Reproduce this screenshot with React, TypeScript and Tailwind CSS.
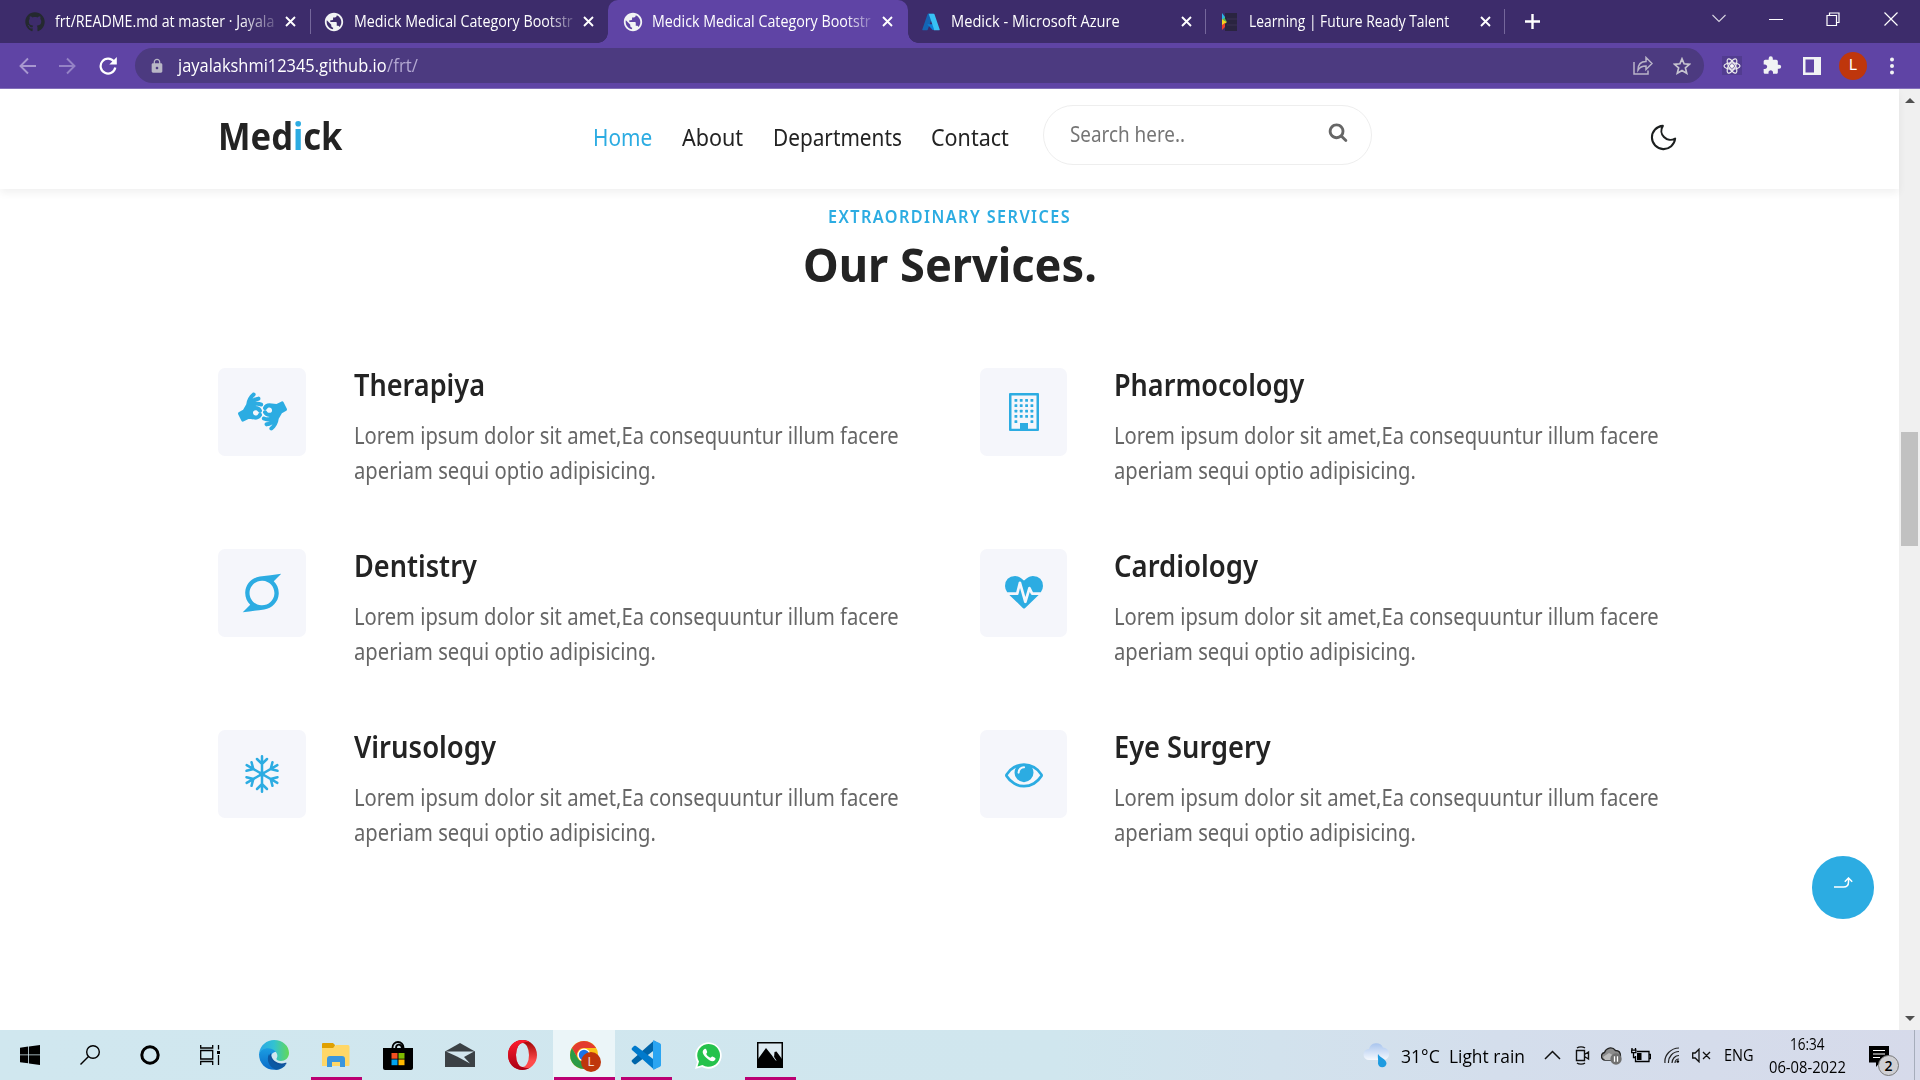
import React, { useLayoutEffect, useRef, useState } from "react";
import { FaAmericanSignLanguageInterpreting, FaSuperpowers, FaGithub } from "react-icons/fa";
import { MdLock, MdPublic, MdExtension } from "react-icons/md";

/* One line of text, condensed or widened to take exactly `w` pixels. */
function Fit({ w, className = "", children }: { w: number; className?: string; children: React.ReactNode }) {
  const ref = useRef<HTMLSpanElement>(null);
  const [k, setK] = useState(1);
  useLayoutEffect(() => {
    const measure = () => {
      if (ref.current) setK(w / ref.current.offsetWidth);
    };
    measure();
    document.fonts?.ready.then(measure);
  }, [w]);
  return (
    <span className={"block shrink-0 whitespace-nowrap " + className} style={{ width: w }}>
      <span ref={ref} className="inline-block origin-left" style={{ transform: `scaleX(${k})` }}>
        {children}
      </span>
    </span>
  );
}

const Close = () => (
  <svg className="h-[11px] w-[11px] shrink-0" viewBox="0 0 11 11" stroke="#fff" strokeWidth="1.9">
    <path d="M1 1l9 9M10 1l-9 9" />
  </svg>
);

const Globe = () => (
  <span className="flex h-[18px] w-[18px] shrink-0 items-center justify-center">
    <MdPublic className="h-[22px] w-[22px] shrink-0 text-[#f1f3f4]" />
  </span>
);

const AzureLogo = () => (
  <svg className="h-[18px] w-[18px] shrink-0" viewBox="0 0 96 96">
    <path fill="#1464b4" d="M33 4h28L31 88a5 5 0 0 1-4 4H6a4 4 0 0 1-4-6L29 8a5 5 0 0 1 4-4z" />
    <path fill="#0b7fd8" d="M71 60H28l29 31h24z" />
    <path fill="#38c1f4" d="M67 8a5 5 0 0 0-4-4H33a5 5 0 0 1 4 4l27 78a4 4 0 0 1-4 6h30a4 4 0 0 0 4-6z" />
  </svg>
);

const TalentLogo = () => (
  <svg className="h-[18px] w-[16px] shrink-0" viewBox="0 0 16 18">
    <path fill="#2a2440" d="M3 0h12v18H3z" />
    <path fill="#3a3152" d="M5 5.500h10v1H5zM5 11.500h10v1H5z" />
    <path fill="#27b6e8" d="M0 0l3 4v4L0 6z" />
    <path fill="#f5d521" d="M0 6l5 3-5 4z" />
    <path fill="#58b947" d="M2 4l3 5-4-2z" />
    <path fill="#e8402e" d="M0 12l3-2v4l-3 3z" />
  </svg>
);

const Sep = () => <span className="h-[25px] w-px shrink-0 bg-[#75679b]" />;

function TabStrip() {
  return (
    <div className="flex h-[43px] items-center bg-[#3d2c6b] font-['Open_Sans',sans-serif] text-[15.500px] leading-[20px] text-white">
      <div className="flex w-[310px] shrink-0 items-center pl-[25px]">
        <FaGithub className="h-5 w-5 shrink-0 text-[#24292f]" />
        <div className="-mt-[2px] ml-[10px] w-[220px] [mask-image:linear-gradient(to_right,#000_84%,#0003)]">
          <Fit w={219}>frt/README.md at master · Jayala</Fit>
        </div>
        <span className="ml-[10px] flex"><Close /></span>
      </div>
      <Sep />
      <div className="flex w-[297px] shrink-0 items-center pl-[14px]">
        <Globe />
        <div className="-mt-[2px] ml-[11px] w-[219px] [mask-image:linear-gradient(to_right,#000_88%,#0003)]">
          <Fit w={219}>Medick Medical Category Bootstr</Fit>
        </div>
        <span className="ml-[10px] flex"><Close /></span>
      </div>
      <div className="relative flex h-[43px] w-[300px] shrink-0 items-center rounded-t-[10px] bg-[#5f44a5] pl-[16px]">
        <span className="absolute -left-[10px] bottom-0 h-[10px] w-[10px] bg-[radial-gradient(circle_at_0_0,transparent_9.5px,#5f44a5_10px)]" />
        <span className="absolute -right-[10px] bottom-0 h-[10px] w-[10px] bg-[radial-gradient(circle_at_100%_0,transparent_9.5px,#5f44a5_10px)]" />
        <Globe />
        <div className="-mt-[2px] ml-[10px] w-[220px] [mask-image:linear-gradient(to_right,#000_88%,#0003)]">
          <Fit w={219}>Medick Medical Category Bootstr</Fit>
        </div>
        <span className="ml-[10px] flex"><Close /></span>
      </div>
      <div className="flex w-[297px] shrink-0 items-center pl-[14px]">
        <AzureLogo />
        <Fit w={169} className="-mt-[2px] ml-[11px]">Medick - Microsoft Azure</Fit>
        <span className="ml-[61px] flex"><Close /></span>
      </div>
      <Sep />
      <div className="flex w-[298px] shrink-0 items-center pl-[16px]">
        <TalentLogo />
        <Fit w={200} className="-mt-[2px] ml-[11px]">Learning | Future Ready Talent</Fit>
        <span className="ml-[31px] flex"><Close /></span>
      </div>
      <Sep />
      <svg className="ml-[20px] h-[15px] w-[15px] shrink-0" viewBox="0 0 15 15" stroke="#fff" strokeWidth="2.4">
        <path d="M7.500 0v15M0 7.500h15" />
      </svg>
      <div className="ml-auto flex -translate-y-[3px] items-center pr-[22px]">
        <svg className="h-[14px] w-[14px]" viewBox="0 0 14 14" fill="none" stroke="#d8d5e1" strokeWidth="1.1">
          <path d="M.5 3L7 9.500 13.500 3" />
        </svg>
        <svg className="ml-[43px] h-[14px] w-[14px]" viewBox="0 0 14 14" stroke="#fff">
          <path d="M0 7.500h14" />
        </svg>
        <svg className="ml-[43px] h-[14px] w-[14px]" viewBox="0 0 14 14" fill="none" stroke="#fff" strokeWidth="1.2">
          <path d="M1 3.500h9.500v10H1zM3.500 3.500V1H13v9.500h-2.500" />
        </svg>
        <svg className="ml-[44px] h-[14px] w-[14px]" viewBox="0 0 14 14" stroke="#fff" strokeWidth="1.2">
          <path d="M.5.5l13 13M13.500.5l-13 13" />
        </svg>
      </div>
    </div>
  );
}

function Toolbar() {
  return (
    <div className="flex h-[46px] items-center border-b border-[#8571bb] bg-[#5f44a5] pl-[19px] font-['Open_Sans',sans-serif]">
      <svg className="h-[18px] w-[17px]" viewBox="0 0 17 18" fill="none" stroke="#a898d0" strokeWidth="1.9">
        <path d="M17 9H1.500M9 1.500L1.500 9 9 16.500" />
      </svg>
      <svg className="ml-[23px] h-[18px] w-[17px]" viewBox="0 0 17 18" fill="none" stroke="#9583c6" strokeWidth="1.9">
        <path d="M0 9h15.500M8 1.500L15.500 9 8 16.500" />
      </svg>
      <svg className="ml-[23px] h-[18px] w-[18px]" viewBox="0 0 18 18" fill="none" stroke="#fff" strokeWidth="2.2">
        <path d="M15 4.700A7.400 7.400 0 1 0 16.300 10.500" />
        <path fill="#fff" stroke="none" d="M17.800 0v7.500h-7.500z" />
      </svg>
      <div className="ml-[18px] flex h-[35px] w-[1569px] items-center rounded-full bg-[#4c3a80] pl-[14px]">
        <MdLock className="h-4 w-4 text-[#b9b7c6]" />
        <div className="-mt-px ml-[13px] flex items-center text-[18px] leading-[24px]">
          <Fit w={209} className="text-white">jayalakshmi12345.github.io</Fit>
          <Fit w={31} className="text-[#b3a8d1]">/frt/</Fit>
        </div>
        <svg className="ml-auto h-[19px] w-[20px]" viewBox="0 0 20 19" fill="none" stroke="#b9b4c8" strokeWidth="1.5">
          <path d="M1 6v12h14v-3.500M5 14c0-6 3-8.500 8-8.500V1.500l6 6-6 6V10c-4 0-6.500 1.500-8 4z" />
        </svg>
        <svg className="ml-[20px] mr-[13px] h-[18px] w-[18px]" viewBox="0 0 18 18" fill="none" stroke="#c6c3cf" strokeWidth="1.7">
          <path d="M9 1.800l2.100 5 5.400.5-4.100 3.600 1.300 5.300L9 13.400l-4.700 2.800 1.300-5.300L1.500 7.300l5.400-.5z" />
        </svg>
      </div>
      <span className="ml-[18px] flex h-[19px] w-[20px] items-center justify-center bg-[#523c90]">
        <svg className="h-[18px] w-[18px]" viewBox="0 0 18 18" fill="none" stroke="#eee" strokeWidth="1.200">
          <ellipse cx="9" cy="9" rx="8" ry="3.200" />
          <ellipse cx="9" cy="9" rx="8" ry="3.200" transform="rotate(60 9 9)" />
          <ellipse cx="9" cy="9" rx="8" ry="3.200" transform="rotate(120 9 9)" />
          <circle cx="9" cy="9" r="1.500" fill="#fff" />
        </svg>
      </span>
      <MdExtension className="ml-[20px] mr-px h-[21px] w-[20px] text-[#f1f3f4]" />
      <svg className="ml-[20px] h-[18px] w-[18px]" viewBox="0 0 18 18">
        <path fill="#f1f3f4" fillRule="evenodd" d="M0 0h18v18H0zM2.500 2.500v13H11v-13z" />
      </svg>
      <span className="ml-[18px] flex h-[28px] w-[28px] items-center justify-center rounded-full bg-[#bf360c] font-['Roboto',sans-serif] text-[15px] text-white">L</span>
      <svg className="ml-[23px] h-[18px] w-[4px]" viewBox="0 0 4 18" fill="#f1f3f4">
        <circle cx="2" cy="2.500" r="2" />
        <circle cx="2" cy="9" r="2" />
        <circle cx="2" cy="15.500" r="2" />
      </svg>
    </div>
  );
}

function Navbar() {
  return (
    <header className="flex h-[100px] shrink-0 items-start bg-white pl-[218px] text-[#232323] shadow-[0_4px_8px_rgba(0,0,0,0.06)]">
      <Fit w={125} className="mt-[23px] text-[37px] font-bold leading-[48px]">
        Med<span className="text-[#2cace2]">i</span>ck
      </Fit>
      <nav className="ml-[250px] mt-[32px] flex text-[24px] leading-[32px]">
        <Fit w={59} className="text-[#2cace2]">Home</Fit>
        <Fit w={61} className="ml-[30px]">About</Fit>
        <Fit w={129} className="ml-[30px]">Departments</Fit>
        <Fit w={78} className="ml-[29px]">Contact</Fit>
      </nav>
      <div className="ml-[34px] mt-[16px] flex h-[60px] w-[329px] items-center rounded-full border border-[#eeeeee] pl-[26px]">
        <Fit w={115} className="-mt-[3px] text-[21px] leading-[30px] text-[#757575]">Search here..</Fit>
        <svg className="-mt-[7px] ml-[143px] h-[20px] w-[20px]" viewBox="0 0 1792 1792" fill="#666">
          <path d="M1216 832q0-185-131.500-316.500t-316.500-131.500-316.500 131.500-131.500 316.500 131.500 316.500 316.500 131.500 316.500-131.500 131.500-316.500zm512 832q0 52-38 90t-90 38q-54 0-90-38l-343-342q-179 124-399 124-143 0-273.500-55.500t-225-150-150-225-55.500-273.500 55.500-273.500 150-225 225-150 273.500-55.500 273.500 55.500 225 150 150 225 55.500 273.500q0 220-124 399l343 343q37 37 37 90z" />
        </svg>
      </div>
      <svg className="ml-[276px] mt-[33px] h-[31px] w-[31px]" viewBox="0 0 24 24" fill="none" stroke="#1c1f1f" strokeWidth="1.600" strokeLinejoin="round">
        <path d="M21 12.790A9 9 0 1 1 11.500 3 7 7 0 0 0 21 12.790z" />
      </svg>
    </header>
  );
}

const Building = () => (
  <svg className="-mt-px h-[38px] w-[30px]" viewBox="0 0 30 38" fill="#2cace2">
    <path fillRule="evenodd" d="M1 0h28a1 1 0 0 1 1 1v36a1 1 0 0 1-1 1H1a1 1 0 0 1-1-1V1a1 1 0 0 1 1-1zM2.500 2.500v33.200H11V30h8v5.700h8.500V2.500z" />
    {[6, 11.300, 16.700, 22, 27.300].map((y, row) =>
      [5.500, 10.800, 16.200, 21.500].map((x, col) =>
        row === 4 && (col === 1 || col === 2) ? null : <rect key={`${x}-${y}`} x={x} y={y} width="2.800" height="2.800" rx=".5" />
      )
    )}
  </svg>
);

const HeartBeat = () => (
  <svg className="mt-[3px] h-[38px] w-[38px]" viewBox="0 0 1792 1792" fill="#2cace2">
    <path d="M1280 896h305q-5 6-10 10.500t-9 7.500l-3 4-623 600q-18 18-44 18t-44-18l-624-602q-5-2-21-20h369q22 0 39.500-13.500t22.500-34.500l70-281 190 667q6 20 23 33t39 13q21 0 38-13t23-33l146-485 56 112q18 35 57 35zm512-428q0 145-103 300h-369l-111-221q-8-17-25.500-27t-36.500-8q-45 5-56 46l-129 430-196-686q-6-20-23.500-33t-39.500-13-39 13.500-22 34.500l-116 464h-423q-103-155-103-300 0-220 127-344t351-124q62 0 126.500 21.500t120 58 95.500 68.500 76 68q36-36 76-68t95.500-68.500 120-58 126.500-21.500q224 0 351 124t127 344z" />
  </svg>
);

const Eye = () => (
  <svg className="h-[38px] w-[38px]" viewBox="0 0 1792 1792" fill="#2cace2">
    <path d="M1664 960q-152-236-381-353 61 104 61 225 0 185-131.500 316.500t-316.500 131.500-316.500-131.500-131.500-316.500q0-121 61-225-229 117-381 353 133 205 333.500 326.500t434.500 121.500 434.500-121.500 333.500-326.500zm-720-384q0-20-14-34t-34-14q-125 0-214.500 89.500t-89.500 214.500q0 20 14 34t34 14 34-14 14-34q0-86 61-147t147-61q20 0 34-14t14-34zm848 384q0 34-20 69-140 230-376.500 368.500t-499.500 138.500-499.500-139-376.500-368q-20-35-20-69t20-69q140-229 376.500-368t499.500-139 499.500 139 376.500 368q20 35 20 69z" />
  </svg>
);

const Snowflake = () => (
  <svg className="-mt-px h-[38px] w-[38px]" viewBox="-19 -19 38 38" fill="none" stroke="#2cace2" strokeWidth="2.500" strokeLinecap="round">
    {[0, 60, 120, 180, 240, 300].map((a) => (
      <path key={a} transform={`rotate(${a})`} d="M0 0v-17.700M-5-15l5 5 5-5" />
    ))}
    <circle r="1.500" fill="#2cace2" />
  </svg>
);

type Service = { title: string; w: number; icon: React.ReactNode };

const services: Service[] = [
  { title: "Therapiya", w: 131, icon: <FaAmericanSignLanguageInterpreting className="-mt-[2px] h-[49px] w-[49px] text-[#2cace2]" /> },
  { title: "Pharmocology", w: 190, icon: <Building /> },
  { title: "Dentistry", w: 123, icon: <FaSuperpowers className="-mt-px h-[44px] w-[44px] text-[#2cace2]" /> },
  { title: "Cardiology", w: 144, icon: <HeartBeat /> },
  { title: "Virusology", w: 142, icon: <Snowflake /> },
  { title: "Eye Surgery", w: 157, icon: <Eye /> },
];

function Services() {
  return (
    <section className="flex flex-col">
      <div className="flex flex-col items-center pt-[14px]">
        <Fit w={243} className="text-[17px] font-semibold leading-[28px] tracking-[1.500px] text-[#2cace2]">EXTRAORDINARY SERVICES</Fit>
        <Fit w={294} className="mt-[2px] text-[47px] font-bold leading-[62px] text-[#232323]">Our Services.</Fit>
      </div>
      <div className="ml-[218px] mt-[73px] grid grid-cols-[762px_700px] gap-y-[93px]">
        {services.map((s) => (
          <div key={s.title} className="group flex h-[88px]">
            <div className="flex h-[88px] w-[88px] shrink-0 items-center justify-center rounded-[7px] bg-[#f5f6fb] group-even:w-[87px]">{s.icon}</div>
            <div className="ml-[48px] group-even:ml-[47px]">
              <Fit w={s.w} className="-mt-[4px] text-[30px] font-semibold leading-[41px] text-[#232323]">{s.title}</Fit>
              <div className="mt-[13px] text-[23px] leading-[35px] text-[#666]">
                <Fit w={545}>Lorem ipsum dolor sit amet,Ea consequuntur illum facere</Fit>
                <Fit w={302}>aperiam sequi optio adipisicing.</Fit>
              </div>
            </div>
          </div>
        ))}
      </div>
    </section>
  );
}

const WindowsLogo = () => (
  <svg className="h-[20px] w-[20px]" viewBox="0 0 20 20">
    <path d="M0 2.800l8.200-1.200v7.900H0zM9 1.400L20 0v9.500H9zM0 10.300h8.200v8L0 17.200zM9 10.300h11V20L9 18.500z" />
  </svg>
);
const SearchGlyph = () => (
  <svg className="h-[20px] w-[20px]" viewBox="0 0 20 20" fill="none" stroke="#000" strokeWidth="1.400">
    <circle cx="13" cy="7" r="6.300" />
    <path d="M8.500 11.500L.5 19.500" />
  </svg>
);
const Cortana = () => (
  <svg className="h-[20px] w-[20px]" viewBox="0 0 20 20" fill="none" stroke="#000" strokeWidth="3">
    <circle cx="10" cy="10" r="8.200" />
  </svg>
);
const TaskView = () => (
  <svg className="h-[20px] w-[20px]" viewBox="0 0 20 20" fill="none" stroke="#000" strokeWidth="1.300">
    <path d="M.7 0v3h12V0M.7 20v-3.500h12V20M.7 5.500h12v8.500H.7zM18.500 0v4.500M18.500 10v10" />
    <path fill="#000" stroke="none" d="M17 6h3v3h-3z" />
  </svg>
);
const Edge = () => (
  <svg className="h-[30px] w-[30px]" viewBox="0 0 30 30">
    <defs>
      <linearGradient id="edgeTop" x1="0" x2="1"><stop offset="0" stopColor="#2aa6e6" /><stop offset=".5" stopColor="#32c2d2" /><stop offset="1" stopColor="#63d957" /></linearGradient>
      <linearGradient id="edgeLeft" x1="0" y1="0" x2="0" y2="1"><stop offset="0" stopColor="#1b9de2" /><stop offset="1" stopColor="#0a6bc8" /></linearGradient>
    </defs>
    <path fill="url(#edgeTop)" d="M0 14C1 5 8 0 15 0c9 0 15 6 15 13 0 5-4 8-8 8-3 0-5-1-4.500-2.500C19 17 19 12 14 10 9 8 3 9 0 14z" />
    <path fill="url(#edgeLeft)" d="M0 14c2-5 8-7 13-5 3 1 4 3 4 3-4 0-6 4-5 8 1 5 5 9 8 9.200C9 32 0 25 0 14z" />
    <path fill="#10519b" d="M12 13c-3 3-3 8 0 11 4 4 10 4 15 0 1-1 .5-1.500-.5-1.200C20 25 12 21 12 13z" />
    <path fill="#0c59a4" d="M10 14c-3 6 0 13 7 15.800 4 0 8-2 10.500-6-6 4-15 0-17.500-9.800z" />
  </svg>
);
const Explorer = () => (
  <svg className="h-[24px] w-[28px]" viewBox="0 0 28 24">
    <path fill="#e0a000" d="M0 1a1 1 0 0 1 1-1h10l2 2-1 4H0z" />
    <path fill="#ffd767" d="M0 5h11l3-3h12a1.500 1.500 0 0 1 1.500 1.500V22a1 1 0 0 1-1 1H0z" />
    <path fill="#3a96dd" d="M5 24v-8a3 3 0 0 1 3-3h12a3 3 0 0 1 3 3v8h-5v-5h-8v5z" />
  </svg>
);
const Store = () => (
  <svg className="h-[29px] w-[30px]" viewBox="0 0 30 29">
    <path fill="none" stroke="#000" strokeWidth="1.800" d="M9.500 8V6.500a5.500 5.500 0 0 1 11 0V8M13 7c0-4 5-5 6 0" />
    <path d="M0 7h30v20a2 2 0 0 1-2 2H2a2 2 0 0 1-2-2z" />
    <path fill="#f25022" d="M8.500 12h6v5.700h-6z" />
    <path fill="#7fba00" d="M15.500 12h6v5.700h-6z" />
    <path fill="#00a4ef" d="M8.500 18.500h6v5.700h-6z" />
    <path fill="#ffb900" d="M15.500 18.500h6v5.700h-6z" />
  </svg>
);
const Mail = () => (
  <svg className="h-[24px] w-[30px]" viewBox="0 0 30 24">
    <path fill="#3b4145" d="M0 8.500L15 0l15 8.500V24H0z" />
    <path fill="#d3e6ee" d="M1 8.500h28L19 14l6 6.500L12 13.500z" />
  </svg>
);
const Opera = () => (
  <svg className="h-[30px] w-[29px]" viewBox="0 0 29 30">
    <defs>
      <linearGradient id="operaL" x1="0" y1="0" x2="0" y2="1"><stop offset="0" stopColor="#ff1b2d" /><stop offset="1" stopColor="#a70014" /></linearGradient>
      <linearGradient id="operaR" x1="0" y1="0" x2="0" y2="1"><stop offset="0" stopColor="#9c0000" /><stop offset=".7" stopColor="#ff4b4b" /></linearGradient>
    </defs>
    <path fill="url(#operaR)" fillRule="evenodd" d="M14.500 0a14.500 15 0 1 1 0 30 14.500 15 0 0 1 0-30zm0 3a6.500 12 0 1 0 0 24 6.500 12 0 0 0 0-24z" />
    <path fill="url(#operaL)" fillRule="evenodd" d="M14.500 0C6 0 0 6.500 0 15s6 15 14.500 15c3 0 5.500-1 7.500-2.500-3 1-5 .5-7.500-.5a6.500 12 0 0 1 0-24c2.500-1 4.500-1.500 7.500-.5C20 1 17.500 0 14.500 0z" />
  </svg>
);
const Chrome = () => (
  <span className="relative flex">
    <svg className="h-[28px] w-[28px]" viewBox="0 0 28 28">
      <circle cx="14" cy="14" r="14" fill="#fbc116" />
      <path fill="#e33b2e" d="M1.900 7A14 14 0 0 1 26.100 7H14a7 7 0 0 0-6.100 10.500z" />
      <path fill="#2b9b47" d="M1.900 7l6 10.500A7 7 0 0 0 20 17.500L14 28A14 14 0 0 1 1.900 7z" />
      <circle cx="14" cy="14" r="6.500" fill="#fff" />
      <circle cx="14" cy="14" r="5.200" fill="#1a73e8" />
    </svg>
    <span className="absolute left-[11px] top-[11px] flex h-5 w-5 items-center justify-center rounded-full bg-[#bf360c] font-['Roboto',sans-serif] text-[12px] text-white/80">L</span>
  </span>
);
const VsCode = () => (
  <svg className="h-[30px] w-[30px]" viewBox="0 0 30 30">
    <path fill="#0065a9" d="M30 5L23 .5 1 20a1.500 1.500 0 0 0 0 2l2 2c.5.5 1.500.5 2 0L30 5z" />
    <path fill="#007acc" d="M30 25l-7 4.500L1 10a1.500 1.500 0 0 1 0-2l2-2c.5-.5 1.500-.5 2 0l25 19z" />
    <path fill="#2aa5f2" d="M22 29.800V.200L28.500 3A2.500 2.500 0 0 1 30 5v20a2.500 2.500 0 0 1-1.500 2z" />
  </svg>
);
const WhatsApp = () => (
  <svg className="h-[27px] w-[27px]" viewBox="0 0 27 27">
    <path fill="#fff" d="M0 27l2-7A13.200 13.200 0 1 1 7 25z" />
    <path fill="#25c24c" d="M2.500 24.500L4 19.500A11.400 11.400 0 1 1 7.500 23z" />
    <path fill="#fff" d="M9.500 7c-3 2-2 5 1.500 8.500s7 5 9 2.500c1-1.500.5-2-.5-2.500l-2-1c-1-.4-1.500 1.300-2.200 1.200-1.500-.5-3.500-2.200-4-3.700 0-.7 1-1.200.9-2L11.300 7.500C11 6.700 10.300 6.700 9.500 7z" />
  </svg>
);
const Photos = () => (
  <svg className="h-[26px] w-[26px]" viewBox="0 0 26 26">
    <path fill="#dceaf1" stroke="#000" strokeWidth="1.500" d="M.75.75h24.500v24.500H.75z" />
    <path d="M1 17l8-11 8 10 .5-6 2-.5L25 17v8H1z" />
    <path stroke="#c8dce4" strokeWidth="1" d="M16 14l3 4.500" />
  </svg>
);

const pinned: { icon: React.ReactNode; line?: string; active?: boolean }[] = [
  { icon: <Edge /> },
  { icon: <Explorer />, line: "w-[51px]" },
  { icon: <Store /> },
  { icon: <Mail /> },
  { icon: <Opera /> },
  { icon: <Chrome />, line: "w-[61px]", active: true },
  { icon: <VsCode />, line: "w-[51px]" },
  { icon: <WhatsApp /> },
  { icon: <Photos />, line: "w-[51px]" },
];

function Taskbar() {
  return (
    <div className="flex h-[50px] items-center bg-[linear-gradient(to_right,#d0e7ef_0%,#d0e6ee_55%,#d4deec_78%,#d6daea_100%)] font-['Open_Sans',sans-serif] text-black">
      {[<WindowsLogo />, <SearchGlyph />, <Cortana />, <TaskView />].map((icon, i) => (
        <div key={i} className="flex w-[60px] shrink-0 justify-center">{icon}</div>
      ))}
      <div className="ml-[3px] flex">
        {pinned.map((p, i) => (
          <div key={i} className={"flex h-[50px] w-[62px] shrink-0 flex-col items-center " + (p.active ? "bg-[#ebf5f8]" : "")}>
            <div className="flex h-[47px] items-center pt-[3px]">{p.icon}</div>
            {p.line && <div className={"h-[3px] bg-[#bb0072] " + p.line} />}
          </div>
        ))}
      </div>
      <svg className="ml-auto h-[26px] w-[28px]" viewBox="0 0 28 26">
        <defs>
          <linearGradient id="cloud" x1="0" y1="0" x2="0" y2="1"><stop offset="0" stopColor="#a9c5ee" /><stop offset="1" stopColor="#f4f8fd" /></linearGradient>
        </defs>
        <path fill="url(#cloud)" d="M6 18a5.500 5.500 0 0 1 0-11 7.500 7.500 0 0 1 14-1.500A6.300 6.300 0 0 1 21 18z" />
        <path fill="#1e9be0" d="M15 12c-.5 4 .5 5 0 9.500a4.300 4.300 0 0 0 8.500 0C23.500 17 17 16 15 12z" />
      </svg>
      <div className="ml-[10px] flex gap-[9px] pt-px text-[18.500px] leading-[24px]">
        <Fit w={39}>31°C</Fit>
        <Fit w={76}>Light rain</Fit>
      </div>
      <svg className="ml-[19px] h-[10px] w-[17px]" viewBox="0 0 17 10" fill="none" stroke="#111" strokeWidth="1.500"><path d="M1 9l7.500-7.500L16 9" /></svg>
      <svg className="ml-[14px] h-[19px] w-[15px]" viewBox="0 0 15 19" fill="none" stroke="#111" strokeWidth="1.400">
        <path d="M1.500 4.500h8v10h-8zM9.500 8.500l4-2.500v7l-4-2.500M2 2c2-1.500 6-1.500 8 0M2 17c2 1.500 6 1.500 8 0" />
      </svg>
      <svg className="ml-[11px] h-[19px] w-[21px]" viewBox="0 0 21 19">
        <path fill="#8c8c8c" stroke="#222" strokeWidth="1.300" d="M4 14a3.800 3.800 0 0 1-.5-7.500C5 2 11 0 14.500 4.500c3 0 5 2 5 5.500L12 14z" />
        <path fill="#bcbcbc" d="M2 11l6-4 9 5-5 2H4z" />
        <circle cx="15" cy="13" r="5.700" fill="#707070" />
        <path stroke="#fff" strokeWidth="1.300" d="M13.500 10.300v5.400M16.500 10.300v5.400" />
      </svg>
      <svg className="ml-[9px] h-[15px] w-[20px]" viewBox="0 0 20 15" fill="none" stroke="#000" strokeWidth="1.300">
        <path d="M6 3.500h12v10H4.500V8M18.500 6.500h1v4h-1M2.500 4.500v5h2M1 0v2M4.500 0v2M.7 2.200h4.200v2.500H.7z" />
        <path fill="#000" stroke="none" d="M6 5h4.500v7H6z" />
      </svg>
      <svg className="ml-[13px] h-[16px] w-[16px]" viewBox="0 0 16 16" fill="none" stroke="#222" strokeWidth="1.200">
        <path d="M1 16C0 8 7 1 15 1M4.500 16C4 10 9 4.500 15 4.500M8 16c0-4 3-7.500 7-7.500M11 16c0-2 1.500-4 4-4" />
        <circle cx="13.800" cy="14.500" r="1.300" fill="#000" stroke="none" />
      </svg>
      <svg className="ml-[12px] h-[15px] w-[19px]" viewBox="0 0 19 15" fill="none" stroke="#111" strokeWidth="1.300">
        <path d="M.7 5h2.500L7 1.200v12.600L3.200 10H.7zM11 4l7 7M18 4l-7 7" />
      </svg>
      <Fit w={30} className="ml-[13px] text-[15.500px] leading-[20px]">ENG</Fit>
      <div className="ml-[15px] flex flex-col items-center gap-[3px] text-[15.500px] leading-[20px]">
        <Fit w={35}>16:34</Fit>
        <Fit w={77}>06-08-2022</Fit>
      </div>
      <div className="relative ml-[23px] h-[18px] w-[20px] shrink-0">
        <svg className="h-[22px] w-[20px]" viewBox="0 0 20 22">
          <path d="M0 0h20v16.500h-9L7 21v-4.500H0z" />
          <path stroke="#fff" strokeWidth="1.200" d="M4 4.500h12M4 8h12M4 11.500h7" />
        </svg>
        <span className="absolute left-[9px] top-[9px] flex h-[21px] w-[21px] items-center justify-center rounded-full border border-[#777] bg-[#cfcfd3] text-[14px] font-semibold leading-none">2</span>
      </div>
      <div className="ml-[25px] mr-[5px] h-full w-px bg-[#a6adbb]" />
    </div>
  );
}

export default function App() {
  return (
    <div className="flex h-[1080px] w-[1920px] flex-col overflow-hidden bg-white">
      <TabStrip />
      <Toolbar />
      <div className="flex h-[941px]">
        <main className="relative w-[1899px] bg-white font-['Noto_Sans',sans-serif]">
          <Navbar />
          <Services />
          <button className="absolute left-[1812px] top-[767px] flex h-[63px] w-[62px] items-center justify-center rounded-full bg-[#2cace2]">
            <svg className="-mt-[10px] h-[11px] w-[19px]" viewBox="0 0 19 11" fill="none" stroke="#fff" strokeWidth="1.500">
              <path d="M0 10h9.500c3.500 0 5-2 5-5V1.500M10.800 4.800l3.700-3.800 3.700 3.800" />
            </svg>
          </button>
        </main>
        <div className="flex w-[21px] flex-col items-center bg-[#f0f0f0]">
          <div className="mt-[9px] h-0 w-0 border-x-[5px] border-b-[5px] border-x-transparent border-b-[#505050]" />
          <div className="mt-[329px] h-[114px] w-[17px] bg-[#c1c1c1]" />
          <div className="mb-[9px] mt-auto h-0 w-0 border-x-[5px] border-t-[5px] border-x-transparent border-t-[#505050]" />
        </div>
      </div>
      <Taskbar />
    </div>
  );
}
